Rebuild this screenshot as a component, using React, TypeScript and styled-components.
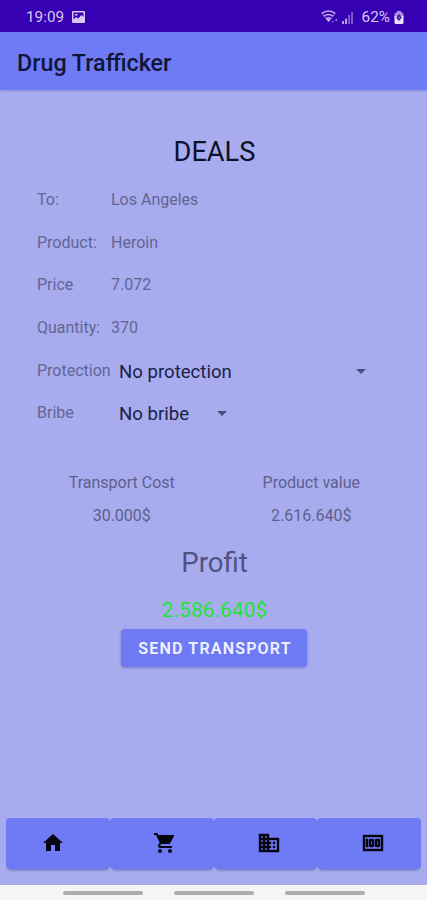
import React from "react";
import styled, { createGlobalStyle } from "styled-components";
import { MdHome, MdBusiness, MdMoney } from "react-icons/md";

const GlobalStyle = createGlobalStyle`
  * { box-sizing: border-box; }
  body { margin: 0; background: #a8acef; font-family: Roboto, sans-serif; }
`;

const Screen = styled.div`
  width: 427px;
  height: 900px;
  display: flex;
  flex-direction: column;
  background: #a8acef;
  overflow: hidden;
`;

const StatusBar = styled.header`
  height: 32px;
  flex: none;
  padding: 2px 23px 0 26px;
  display: flex;
  align-items: center;
  background: #3700b3;
  color: #d5c8f2;
  font-size: 15.3px;
  line-height: 20px;
`;

const StatusIcons = styled.div`
  margin-left: auto;
  display: flex;
  align-items: center;
`;

const StatusSvg = styled.svg<{ $gap?: number }>`
  display: block;
  margin-left: ${(p) => p.$gap ?? 0}px;
`;

const Percent = styled.span`
  margin-left: 8px;
`;

const AppBar = styled.div`
  height: 58px;
  flex: none;
  padding: 3px 17px 0;
  display: flex;
  align-items: center;
  background: #6e7bf4;
  color: #101539;
  font-size: 23.3px;
  font-weight: 500;
  box-shadow: 0 1px 2px rgba(60, 65, 130, 0.25);
`;

const Content = styled.main`
  flex: 1;
  display: flex;
  flex-direction: column;
  align-items: center;
`;

const Heading = styled.h1`
  margin: 45px 0 0 2px;
  height: 34px;
  line-height: 34px;
  font-size: 27.2px;
  font-weight: 400;
  color: #0c1028;
`;

const Form = styled.div`
  width: 100%;
  margin-top: 9px;
  padding-left: 37px;
`;

const Row = styled.div`
  height: 42.7px;
  display: flex;
  align-items: center;
`;

const Label = styled.span`
  width: 74px;
  flex: none;
  white-space: nowrap;
  color: #616592;
  font-size: 16px;
`;

const Value = styled(Label)`
  width: auto;
`;

const Select = styled.div<{ $width: number }>`
  width: ${(p) => p.$width}px;
  margin-left: 8px;
  padding-top: 3px;
  display: flex;
  align-items: center;
  justify-content: space-between;
  color: #1c2146;
  font-size: 18.6px;
`;

const Caret = styled.svg`
  display: block;
  margin-bottom: 1px;
  fill: #474d7c;
`;

const Totals = styled.div`
  width: 379px;
  margin: 33px 0 0 6px;
  display: grid;
  grid-template-columns: 1fr 1fr;
  text-align: center;
`;

const Total = styled.div`
  color: #5c608c;
  font-size: 16px;
  line-height: 32.5px;
`;

const ProfitLabel = styled.div`
  margin: 13px 0 0 2px;
  height: 36px;
  line-height: 36px;
  font-size: 27.6px;
  color: #4e5380;
`;

const ProfitValue = styled.div`
  margin: 16px 0 0 2px;
  height: 27px;
  line-height: 27px;
  font-size: 21px;
  color: #21e535;
`;

const SendButton = styled.button`
  margin: 5px 0 0 1px;
  width: 186px;
  height: 38px;
  padding: 0 0 0 2px;
  border: 0;
  border-radius: 4px;
  background: #6e7bf4;
  color: #f1f2ff;
  font: 600 16px Roboto, sans-serif;
  letter-spacing: 1.2px;
  box-shadow: 0 1px 3px rgba(60, 65, 130, 0.4);
`;

const Tabs = styled.nav`
  flex: none;
  margin: 0 6px 16px;
  display: grid;
  grid-template-columns: repeat(4, 1fr);
`;

const Tab = styled.button<{ $first?: boolean; $bold?: boolean }>`
  height: 51px;
  padding: 0 ${(p) => (p.$first ? 9 : 0)}px 2px ${(p) => (p.$first ? 0 : 7)}px;
  border: 0;
  border-radius: 4px;
  display: flex;
  align-items: center;
  justify-content: center;
  background: #6e7bf4;
  color: #05060f;
  font-size: 24px;
  box-shadow: 0 3px 3px -2px rgba(60, 65, 130, 0.6);

  path:not([fill="none"]) {
    stroke: ${(p) => (p.$bold ? "currentColor" : "none")};
    stroke-width: 0.4px;
  }
`;

const SystemBar = styled.footer`
  height: 15px;
  flex: none;
  padding: 1px 0 0 63px;
  display: flex;
  align-items: center;
  gap: 31px;
  background: #f5f5f6;
`;

const Handle = styled.span`
  width: 80px;
  height: 4px;
  border-radius: 2px;
  background: #adadae;
`;

const details = [
  ["To:", "Los Angeles"],
  ["Product:", "Heroin"],
  ["Price", "7.072"],
  ["Quantity:", "370"],
];

const DropDown = () => (
  <Caret width="10" height="5" viewBox="0 0 10 5">
    <path d="M0 0h10L5 5z" />
  </Caret>
);

const CartIcon = () => (
  <svg width="24" height="24" viewBox="0 0 24 24" fill="currentColor">
    <circle cx="7" cy="20" r="2" />
    <circle cx="17" cy="20" r="2" />
    <path d="M1 2v2h2l3.6 7.59-1.35 2.45c-.16.28-.25.61-.25.96 0 1.1.9 2 2 2h12v-2H7.42c-.14 0-.25-.11-.25-.25l.03-.12.9-1.63h7.45c.75 0 1.41-.41 1.75-1.03l3.58-6.49c.08-.14.12-.31.12-.48 0-.55-.45-1-1-1H5.21l-.94-2H1z" />
  </svg>
);

export default function App() {
  return (
    <>
      <GlobalStyle />
      <Screen>
        <StatusBar>
          <span>19:09</span>
          <StatusSvg $gap={8} width="13" height="12" viewBox="0 0 13 12">
            <path fill="#d5c8f2" fillRule="evenodd" d="M1 0h11a1 1 0 0 1 1 1v10a1 1 0 0 1-1 1H1a1 1 0 0 1-1-1V1a1 1 0 0 1 1-1zM1.5 1.5v7L4 6l2.2 1.5L9.5 4l2 2V1.5zM3 3h2.5v1.6H3z" />
          </StatusSvg>
          <StatusIcons>
            <StatusSvg width="17" height="14" viewBox="0 0 17 14">
              <g fill="none" stroke="#c4b0ec" strokeWidth="1.5">
                <path d="M.8 3.4Q7.5-1.5 14.2 3.4M3 6.1Q7.5 2.8 12 6.1M5.2 8.6Q7.5 7 9.8 8.6" />
                <path d="M.8 3.4l6.7 8.3 6.7-8.3" strokeWidth="1" opacity=".6" />
              </g>
              <path fill="#c4b0ec" d="M5.3 9h4.4l-2.2 3z" />
              <path fill="#9273d8" d="M10.5 11h2.4l-1.2 2zM14 11l1.2-3 1.3 3z" />
            </StatusSvg>
            <StatusSvg $gap={4} width="12" height="13" viewBox="0 0 12 13">
              <path fill="#b69fe6" d="M0 10h2v3H0zM3 7.5h2V13H3z" />
              <path fill="#7c59cf" d="M6 4h2v9H6zM9 1h2v12H9z" />
            </StatusSvg>
            <Percent>62%</Percent>
            <StatusSvg $gap={4} width="10" height="13" viewBox="0 0 10 13">
              <path fill="#a98fe2" d="M3 0h4v1.5h1.5L9.5 3v3h-9V3l1-1.5H3z" />
              <path fill="#e9e1f9" d="M.5 5h9v7l-.8 1H1.3l-.8-1z" />
              <path fill="#3d1498" d="M5 3l2.8 3.5L5 10 2.2 6.5z" />
              <path fill="#b9a4e8" d="M4.4 6h1.4v1.2H4.4z" />
            </StatusSvg>
          </StatusIcons>
        </StatusBar>
        <AppBar>Drug Trafficker</AppBar>
        <Content>
          <Heading>DEALS</Heading>
          <Form>
            {details.map(([label, value]) => (
              <Row key={label}>
                <Label>{label}</Label>
                <Value>{value}</Value>
              </Row>
            ))}
            <Row>
              <Label>Protection</Label>
              <Select $width={247}>No protection<DropDown /></Select>
            </Row>
            <Row>
              <Label>Bribe</Label>
              <Select $width={108}>No bribe<DropDown /></Select>
            </Row>
          </Form>
          <Totals>
            <Total>Transport Cost</Total>
            <Total>Product value</Total>
            <Total>30.000$</Total>
            <Total>2.616.640$</Total>
          </Totals>
          <ProfitLabel>Profit</ProfitLabel>
          <ProfitValue>2.586.640$</ProfitValue>
          <SendButton>SEND TRANSPORT</SendButton>
        </Content>
        <Tabs>
          <Tab $first aria-label="Home"><MdHome /></Tab>
          <Tab aria-label="Market"><CartIcon /></Tab>
          <Tab $bold aria-label="Properties"><MdBusiness /></Tab>
          <Tab $bold aria-label="Money"><MdMoney /></Tab>
        </Tabs>
        <SystemBar>
          <Handle />
          <Handle />
          <Handle />
        </SystemBar>
      </Screen>
    </>
  );
}
